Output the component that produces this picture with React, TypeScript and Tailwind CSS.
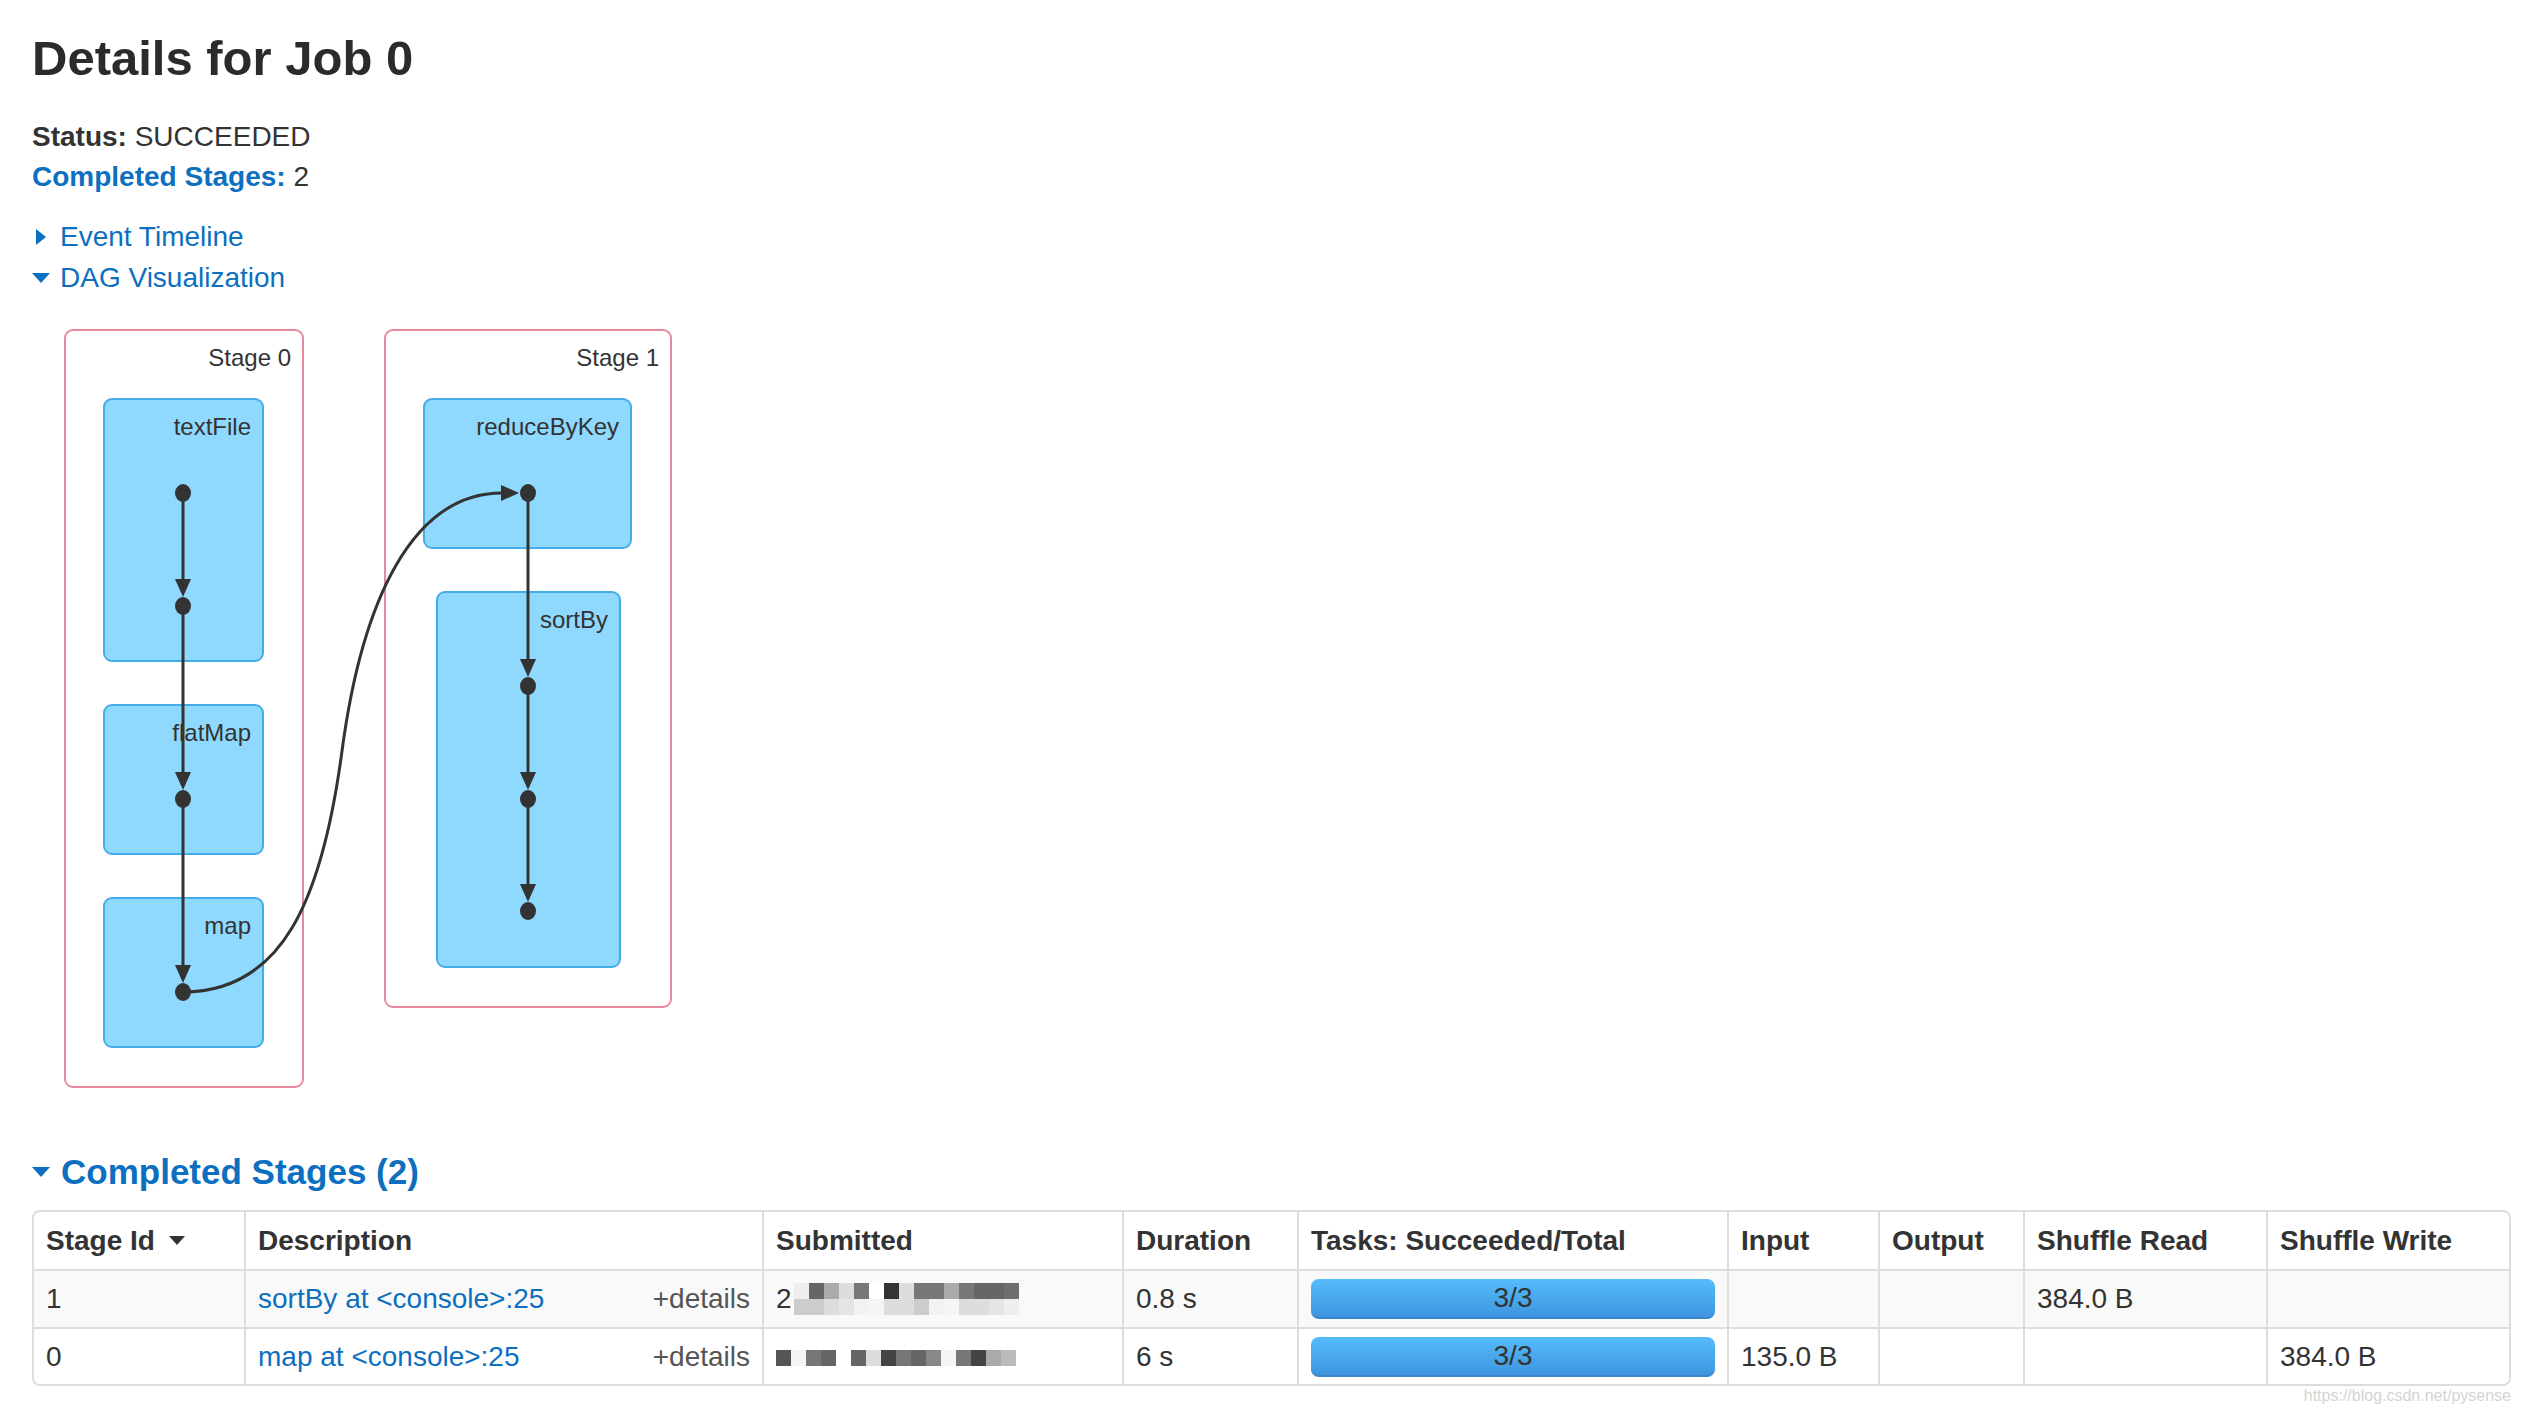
import React from "react";

const FONT = { fontFamily: '"Liberation Sans", Arial, sans-serif' };

const mosaicTop = ["#eeeeee", "#666666", "#aaaaaa", "#dddddd", "#777777", "#ffffff", "#333333", "#dddddd", "#777777", "#777777", "#aaaaaa", "#777777", "#666666", "#666666", "#6e6e6e"];
const mosaicBottom = ["#cccccc", "#cccccc", "#dddddd", "#e5e5e5", "#f2f2f2", "#f5f5f5", "#dddddd", "#dddddd", "#cccccc", "#f2f2f2", "#f5f5f5", "#dddddd", "#dddddd", "#e5e5e5", "#eeeeee"];
const mosaicRow2 = ["#555555", "#f5f5f5", "#777777", "#666666", "#ffffff", "#666666", "#dddddd", "#444444", "#777777", "#666666", "#888888", "#f5f5f5", "#777777", "#444444", "#aaaaaa", "#bbbbbb"];

function Mosaic({ rows, lead }: { rows: string[][]; lead?: string }) {
  return (
    <span className="inline-flex items-center gap-[2px]">
      {lead && <span>{lead}</span>}
      <svg width={240} height={rows.length * 16} className="inline-block">
        {rows.map((row, r) =>
          row.map((c, i) => <rect key={r + "-" + i} x={i * 15} y={r * 16} width={15} height={16} fill={c} />)
        )}
      </svg>
    </span>
  );
}

function VArrow({ x, y1, y2 }: { x: number; y1: number; y2: number }) {
  // line from dot at y1 to dot at y2 with head touching the lower dot
  const tip = y2 - 9;
  return (
    <g>
      <line x1={x} y1={y1} x2={x} y2={tip - 16} stroke="#333" strokeWidth={3} />
      <polygon points={`${x - 8},${tip - 18} ${x + 8},${tip - 18} ${x},${tip}`} fill="#333" />
    </g>
  );
}

function Dag() {
  return (
    <svg width={700} height={800} className="block" style={FONT}>
      {/* stage clusters */}
      <rect x={33} y={29} width={238} height={757} rx={8} fill="#fff" stroke="#e8899d" strokeWidth={2} />
      <rect x={353} y={29} width={286} height={677} rx={8} fill="#fff" stroke="#e8899d" strokeWidth={2} />
      <text x={259} y={65} textAnchor="end" fontSize={24} fill="#333">Stage 0</text>
      <text x={627} y={65} textAnchor="end" fontSize={24} fill="#333">Stage 1</text>

      {/* rdd nodes */}
      <rect x={72} y={98} width={159} height={262} rx={8} fill="#8fd8fe" stroke="#42ade9" strokeWidth={2} />
      <rect x={72} y={404} width={159} height={149} rx={8} fill="#8fd8fe" stroke="#42ade9" strokeWidth={2} />
      <rect x={72} y={597} width={159} height={149} rx={8} fill="#8fd8fe" stroke="#42ade9" strokeWidth={2} />
      <rect x={392} y={98} width={207} height={149} rx={8} fill="#8fd8fe" stroke="#42ade9" strokeWidth={2} />
      <rect x={405} y={291} width={183} height={375} rx={8} fill="#8fd8fe" stroke="#42ade9" strokeWidth={2} />

      <text x={219} y={134} textAnchor="end" fontSize={24} fill="#333">textFile</text>
      <text x={219} y={440} textAnchor="end" fontSize={24} fill="#333">flatMap</text>
      <text x={219} y={633} textAnchor="end" fontSize={24} fill="#333">map</text>
      <text x={587} y={134} textAnchor="end" fontSize={24} fill="#333">reduceByKey</text>
      <text x={576} y={327} textAnchor="end" fontSize={24} fill="#333">sortBy</text>

      {/* shuffle edge */}
      <path d="M151,691 C250,691 290,600 310,450 S380,192 470,192" fill="none" stroke="#333" strokeWidth={3} />
      <polygon points="469,184 469,200 487,192" fill="#333" />

      <VArrow x={151} y1={192} y2={305} />
      <VArrow x={151} y1={305} y2={498} />
      <VArrow x={151} y1={498} y2={691} />
      <VArrow x={496} y1={192} y2={385} />
      <VArrow x={496} y1={385} y2={498} />
      <VArrow x={496} y1={498} y2={610} />

      {[192, 305, 498, 691].map((y) => (
        <ellipse key={"a" + y} cx={151} cy={y} rx={8} ry={9} fill="#333" />
      ))}
      {[192, 385, 498, 610].map((y) => (
        <ellipse key={"b" + y} cx={496} cy={y} rx={8} ry={9} fill="#333" />
      ))}
    </svg>
  );
}

const cols = [211, 518, 360, 175, 430, 151, 145, 243, 246];
const headers = ["Stage Id", "Description", "Submitted", "Duration", "Tasks: Succeeded/Total", "Input", "Output", "Shuffle Read", "Shuffle Write"];

function Progress() {
  return (
    <div className="h-[40px] rounded-[8px] bg-gradient-to-b from-[#55bcfc] to-[#3e95df] border-b-2 border-[#3a86c9] flex items-center justify-center text-[#333]">
      3/3
    </div>
  );
}

export default function App() {
  return (
    <div className="bg-white min-h-[1414px] pl-[32px] text-[28px] text-[#333]" style={FONT}>
      <h3 className="pt-[28px] text-[49px] leading-[60px] font-bold text-[#2b2b2b]">Details for Job 0</h3>

      <ul className="mt-[29px] leading-[40px]">
        <li>
          <strong>Status:</strong> SUCCEEDED
        </li>
        <li>
          <strong className="text-[#0c6fc0]">Completed Stages:</strong> 2
        </li>
      </ul>

      <div className="mt-[19px] leading-[41px] text-[#0c6fc0]">
        <div className="flex items-center">
          <span className="ml-[4px] w-0 h-0 border-y-[8px] border-y-transparent border-l-[10px] border-l-[#0c6fc0]" />
          <span className="ml-[14px]">Event Timeline</span>
        </div>
        <div className="flex items-center">
          <span className="w-0 h-0 border-x-[9px] border-x-transparent border-t-[10px] border-t-[#0c6fc0]" />
          <span className="ml-[10px]">DAG Visualization</span>
        </div>
      </div>

      <div className="mt-[3px]">
        <Dag />
      </div>

      <h4 className="mt-[46px] flex items-center text-[35px] leading-[50px] font-bold text-[#0c6fc0]">
        <span className="w-0 h-0 border-x-[9px] border-x-transparent border-t-[10px] border-t-[#0c6fc0]" />
        <span className="ml-[11px]">Completed Stages (2)</span>
      </h4>

      <div className="mt-[13px] w-[2479px] border-2 border-[#dddddd] rounded-[8px] overflow-hidden">
        <table className="w-full table-fixed border-collapse">
          <colgroup>
            {cols.map((w, i) => (
              <col key={i} style={{ width: w }} />
            ))}
          </colgroup>
          <thead>
            <tr className="h-[58px]">
              {headers.map((h, i) => (
                <th key={h} className={"px-[12px] text-left font-bold align-middle " + (i > 0 ? "border-l-2 border-[#dddddd]" : "")}>
                  {i === 0 ? (
                    <span className="flex items-center">
                      {h}
                      <span className="ml-[14px] w-0 h-0 border-x-[8px] border-x-transparent border-t-[9px] border-t-[#333]" />
                    </span>
                  ) : (
                    h
                  )}
                </th>
              ))}
            </tr>
          </thead>
          <tbody>
            <tr className="h-[58px] bg-[#f9f9f9] border-t-2 border-[#dddddd]">
              <td className="px-[12px]">1</td>
              <td className="px-[12px] border-l-2 border-[#dddddd]">
                <div className="flex justify-between">
                  <span className="text-[#0c6fc0]">sortBy at &lt;console&gt;:25</span>
                  <span className="text-[#555]">+details</span>
                </div>
              </td>
              <td className="px-[12px] border-l-2 border-[#dddddd]">
                <Mosaic lead="2" rows={[mosaicTop, mosaicBottom]} />
              </td>
              <td className="px-[12px] border-l-2 border-[#dddddd]">0.8 s</td>
              <td className="px-[12px] border-l-2 border-[#dddddd]">
                <Progress />
              </td>
              <td className="px-[12px] border-l-2 border-[#dddddd]"></td>
              <td className="px-[12px] border-l-2 border-[#dddddd]"></td>
              <td className="px-[12px] border-l-2 border-[#dddddd]">384.0 B</td>
              <td className="px-[12px] border-l-2 border-[#dddddd]"></td>
            </tr>
            <tr className="h-[56px] bg-white border-t-2 border-[#dddddd]">
              <td className="px-[12px]">0</td>
              <td className="px-[12px] border-l-2 border-[#dddddd]">
                <div className="flex justify-between">
                  <span className="text-[#0c6fc0]">map at &lt;console&gt;:25</span>
                  <span className="text-[#555]">+details</span>
                </div>
              </td>
              <td className="px-[12px] border-l-2 border-[#dddddd]">
                <Mosaic rows={[mosaicRow2]} />
              </td>
              <td className="px-[12px] border-l-2 border-[#dddddd]">6 s</td>
              <td className="px-[12px] border-l-2 border-[#dddddd]">
                <Progress />
              </td>
              <td className="px-[12px] border-l-2 border-[#dddddd]">135.0 B</td>
              <td className="px-[12px] border-l-2 border-[#dddddd]"></td>
              <td className="px-[12px] border-l-2 border-[#dddddd]"></td>
              <td className="px-[12px] border-l-2 border-[#dddddd]">384.0 B</td>
            </tr>
          </tbody>
        </table>
      </div>

      <div className="w-[2479px] text-right text-[16px] leading-[20px] text-[#d4d4d4]">https://blog.csdn.net/pysense</div>
    </div>
  );
}
